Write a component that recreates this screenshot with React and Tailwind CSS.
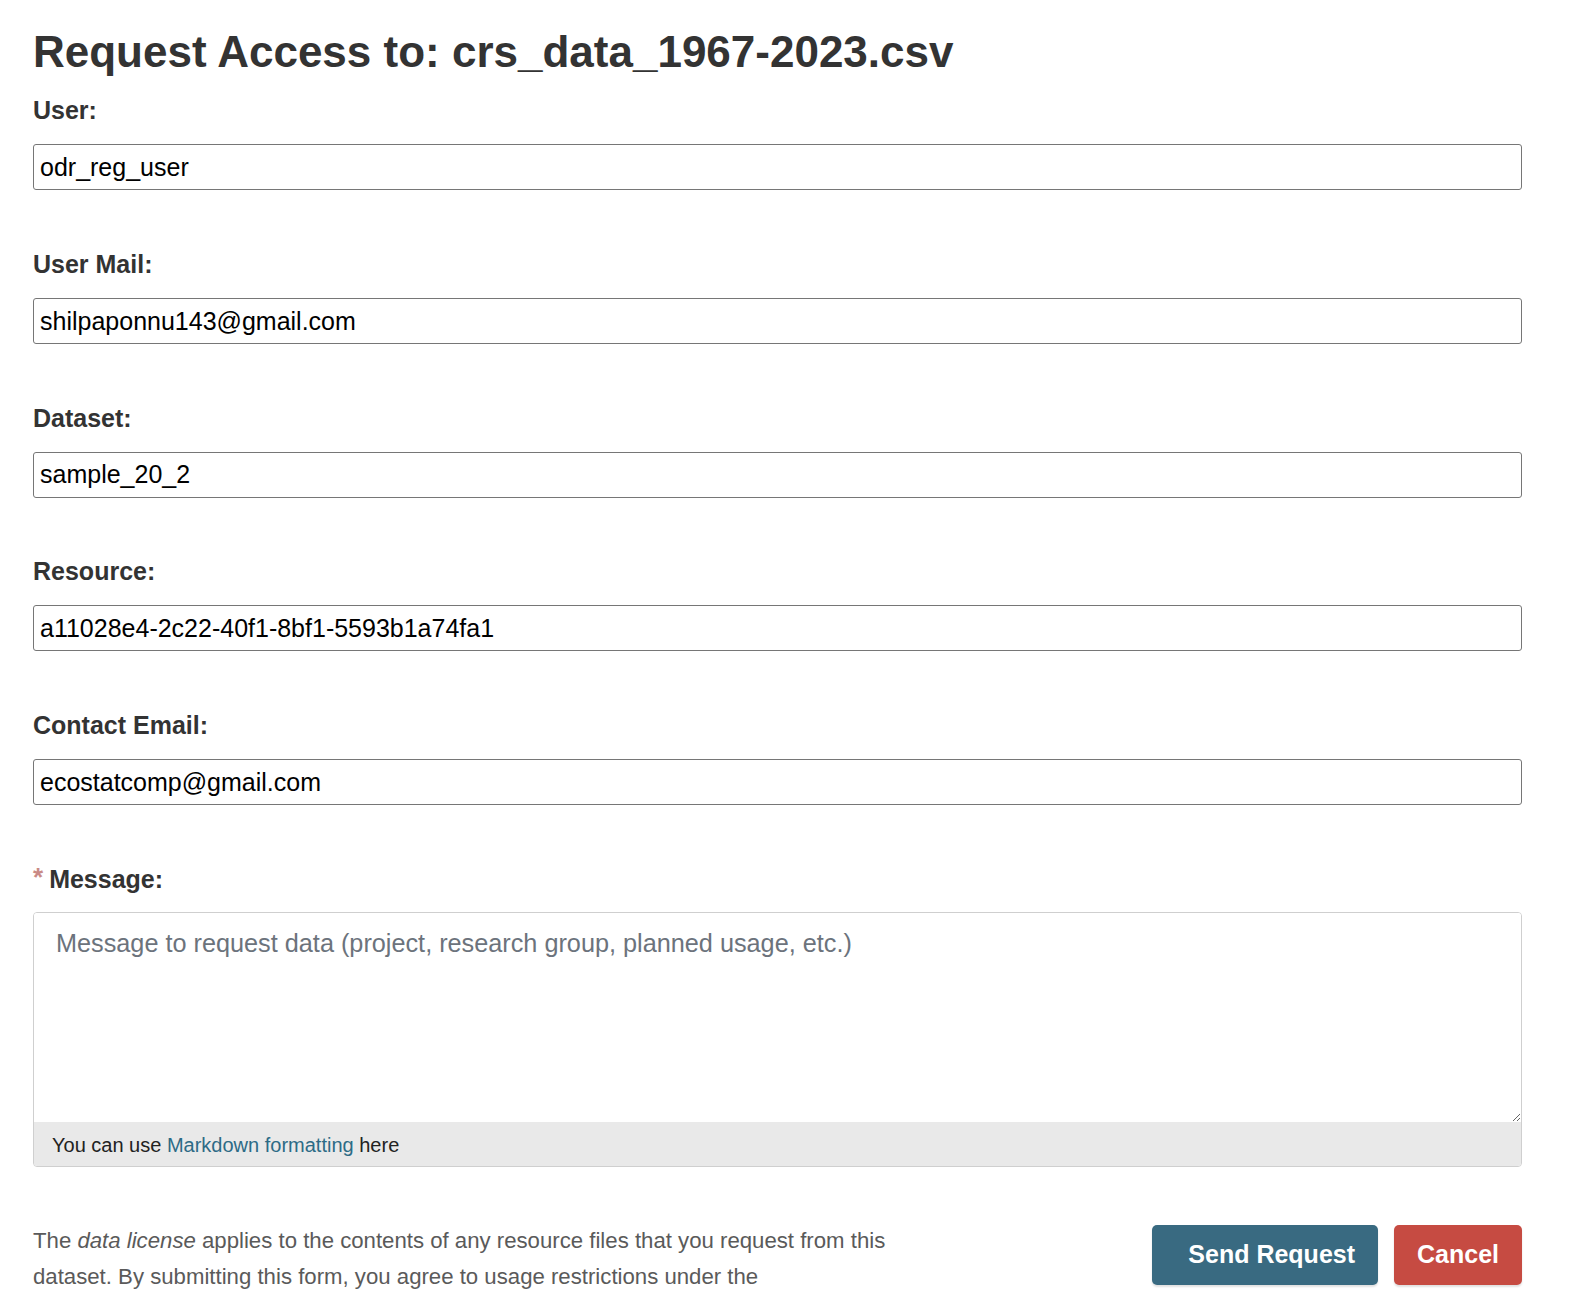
import React from 'react';

const fields = [
  { label: 'User:', value: 'odr_reg_user' },
  { label: 'User Mail:', value: 'shilpaponnu143@gmail.com' },
  { label: 'Dataset:', value: 'sample_20_2' },
  { label: 'Resource:', value: 'a11028e4-2c22-40f1-8bf1-5593b1a74fa1' },
  { label: 'Contact Email:', value: 'ecostatcomp@gmail.com' },
];

function Field({ label, value }) {
  return (
    <div className="mb-[56.7px]">
      <label className="block text-[25px] leading-[35px] font-bold text-[#333] mb-4">{label}</label>
      <input
        type="text"
        readOnly
        defaultValue={value}
        className="block w-full h-[46px] border border-[#767676] rounded-[3px] px-[6px] text-[25px] text-black bg-white outline-none"
      />
    </div>
  );
}

export default function App() {
  return (
    <div className="bg-white min-h-screen pt-[28px] font-['Liberation_Sans',Arial,sans-serif]">
      <div className="ml-[33px] w-[1489px]">
        <h1 className="text-[44px] leading-[1.1] font-bold text-[#333] mb-[17px]">
          Request Access to: crs_data_1967-2023.csv
        </h1>

        {fields.map((f) => (
          <Field key={f.label} label={f.label} value={f.value} />
        ))}

        {/* message */}
        <div>
          <label className="flex items-start h-[35px] text-[25px] leading-[35px] font-bold text-[#333] mb-[15px]">
            <span className="text-[#c98a86] text-[26px] leading-[30px] mr-[6px] font-bold">*</span>
            Message:
          </label>
          <div className="border border-[#cfcfcf] rounded-[4px] overflow-hidden">
            <textarea
              placeholder="Message to request data (project, research group, planned usage, etc.)"
              className="block w-full h-[209px] px-[22px] pt-[13px] text-[25.25px] leading-[35px] text-black placeholder:text-[#6c737c] outline-none resize-y bg-white"
            />
            <div className="bg-[#e9e9e9] h-[44px] flex items-center pl-[18px] pt-[2px] text-[20px] text-[#222]">
              You can use&nbsp;<a href="#" className="text-[#2d6b86]">Markdown formatting</a>&nbsp;here
            </div>
          </div>
        </div>

        {/* footer */}
        <div className="flex justify-between items-start mt-[56px]">
          <p className="w-[895px] text-[22.2px] leading-[36.5px] text-[#5a5a5a]">
            The <em>data license</em> applies to the contents of any resource files that you request from this
            dataset. By submitting this form, you agree to usage restrictions under the
          </p>
          <div className="flex gap-4 pt-[2px]">
            <button className="h-[60px] pl-[36px] pr-[23px] rounded-[5px] bg-[#396a81] text-white text-[25px] font-bold shadow-[0_2px_2px_rgba(0,0,0,0.12)]">
              Send Request
            </button>
            <button className="h-[60px] px-[23px] rounded-[5px] bg-[#c64b42] text-white text-[25px] font-bold shadow-[0_2px_2px_rgba(0,0,0,0.12)]">
              Cancel
            </button>
          </div>
        </div>
      </div>
    </div>
  );
}
